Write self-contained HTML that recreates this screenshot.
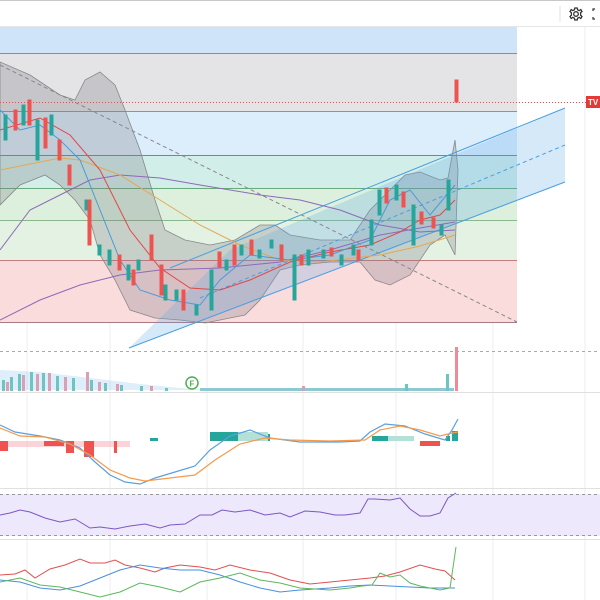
<!DOCTYPE html>
<html><head><meta charset="utf-8"><style>
html,body{margin:0;padding:0;background:#fff;width:600px;height:600px;overflow:hidden;font-family:"Liberation Sans",sans-serif}
svg{display:block}
</style></head><body>
<svg width="600" height="600" viewBox="0 0 600 600" xmlns="http://www.w3.org/2000/svg">
<rect width="600" height="600" fill="#fff"/>
<line x1="0" y1="0.5" x2="600" y2="0.5" stroke="#c8c8c8"/>
<line x1="0" y1="26.5" x2="600" y2="26.5" stroke="#e6e6e6"/>
<line x1="560" y1="6" x2="560" y2="22" stroke="#e0e0e0"/>
<!-- gear -->
<g transform="translate(576,14)" fill="none" stroke="#333" stroke-width="1.3">
<circle r="2.3"/>
<path d="M-1.2,-6 L1.2,-6 L1.6,-4.2 L3.2,-3.4 L4.8,-4.5 L6,-2.5 L4.6,-1.2 L4.6,1.2 L6,2.5 L4.8,4.5 L3.2,3.4 L1.6,4.2 L1.2,6 L-1.2,6 L-1.6,4.2 L-3.2,3.4 L-4.8,4.5 L-6,2.5 L-4.6,1.2 L-4.6,-1.2 L-6,-2.5 L-4.8,-4.5 L-3.2,-3.4 L-1.6,-4.2Z"/>
</g>
<path d="M595,9 L593,9 L593,11 M593,17 L593,19 L595,19" stroke="#333" fill="none" stroke-width="1.2"/>
<!-- grid -->
<g stroke="#eeeeee" stroke-width="1">
<line x1="27" y1="27" x2="27" y2="600"/><line x1="110" y1="27" x2="110" y2="600"/><line x1="207" y1="27" x2="207" y2="600"/><line x1="303" y1="27" x2="303" y2="600"/><line x1="396" y1="27" x2="396" y2="600"/><line x1="493" y1="27" x2="493" y2="600"/><line x1="585" y1="27" x2="585" y2="600"/>
</g>
<!-- fib bands -->
<rect x="0" y="27" width="517" height="26" fill="#cfe4f8"/>
<rect x="0" y="53" width="517" height="58" fill="#e4e4e7"/>
<rect x="0" y="111" width="517" height="44" fill="#dcedfb"/>
<rect x="0" y="155" width="517" height="33" fill="#d2eee9"/>
<rect x="0" y="188" width="517" height="32" fill="#dcf0dd"/>
<rect x="0" y="220" width="517" height="40" fill="#e3f2e3"/>
<rect x="0" y="260" width="517" height="62" fill="#fbdcdd"/>
<g stroke-width="1">
<line x1="0" y1="53.5" x2="517" y2="53.5" stroke="#8a8d94"/>
<line x1="0" y1="111.5" x2="517" y2="111.5" stroke="#6a9bd0"/>
<line x1="0" y1="155.5" x2="517" y2="155.5" stroke="#4e9a8e"/>
<line x1="0" y1="188.5" x2="517" y2="188.5" stroke="#6aaa7a"/>
<line x1="0" y1="220.5" x2="517" y2="220.5" stroke="#8ab88a"/>
<line x1="0" y1="260.5" x2="517" y2="260.5" stroke="#c97a7e"/>
<line x1="0" y1="322.5" x2="517" y2="322.5" stroke="#a77a85"/>
</g>
<!-- bollinger fill -->
<path d="M0,62 L30,75 L60,95 L75,100 L85,80 L100,72 L115,85 L125,110 L140,150 L155,200 L165,230 L185,240 L210,245 L235,240 L260,225 L275,225 L290,235 L320,240 L350,240 L370,210 L390,190 L405,175 L420,172 L440,180 L448,178 L455,140 L458,170 L455,255 L445,235 L430,245 L410,275 L390,285 L375,280 L360,262 L330,262 L300,265 L280,270 L260,300 L245,315 L230,318 L205,323 L180,320 L155,318 L130,310 L115,280 L100,255 L90,220 L75,200 L60,185 L45,175 L20,185 L0,205Z" fill="#7b7b80" fill-opacity="0.28" stroke="#888" stroke-width="0.8"/>
<!-- channel -->
<polygon points="129,348 565,182 565,108 230,250" fill="#5aa8e8" fill-opacity="0.25"/>
<line x1="129" y1="348" x2="565" y2="182" stroke="#4a9fe0" stroke-width="1"/>
<line x1="170" y1="268" x2="565" y2="108" stroke="#4a9fe0" stroke-width="1"/>
<line x1="200" y1="298" x2="565" y2="145" stroke="#4a9fe0" stroke-width="1" stroke-dasharray="4,3"/>
<line x1="0" y1="65" x2="517" y2="322" stroke="#888" stroke-width="1" stroke-dasharray="4,3"/>
<!-- MAs -->
<polyline points="0,250 30,210 60,195 90,180 120,175 160,178 200,185 260,195 300,200 340,210 380,225 420,232 455,230" fill="none" stroke="#8e6ab8" stroke-width="1"/>
<polyline points="0,320 40,300 80,285 120,275 160,270 220,268 280,262 330,250 380,235 420,228 455,222" fill="none" stroke="#8e6ab8" stroke-width="1"/>
<polyline points="0,170 60,158 80,160 120,175 160,200 200,225 240,245 280,260 320,262 380,255 420,246 455,235" fill="none" stroke="#e3a855" stroke-width="1"/>
<polyline points="0,130 40,118 70,135 100,170 130,230 160,268 190,288 220,290 250,280 290,262 330,252 370,245 400,232 420,220 440,215 455,200" fill="none" stroke="#e04848" stroke-width="1"/>
<polyline points="0,110 20,130 40,125 60,140 80,160 100,210 120,260 140,290 170,300 200,305 220,280 250,255 290,260 330,255 370,240 390,200 410,190 430,215 455,185" fill="none" stroke="#4a9ad8" stroke-width="1"/>
<!-- price line -->
<line x1="0" y1="102.5" x2="600" y2="102.5" stroke="#e05050" stroke-width="1" stroke-dasharray="1,2"/>
<rect x="586" y="96" width="14" height="12" fill="#e53935"/>
<text x="588" y="105" font-size="8" font-weight="bold" fill="#fff">TV</text>
<!-- candles -->
<g stroke-width="1">
<g fill="#26a69a" stroke="#26a69a">
<rect x="4" y="115" width="3" height="25"/><rect x="22" y="105" width="3" height="20"/><rect x="36" y="120" width="3" height="40"/><rect x="50" y="115" width="3" height="20"/><rect x="85" y="200" width="3" height="10"/><rect x="98" y="245" width="3" height="10"/><rect x="108" y="250" width="3" height="15"/><rect x="127" y="265" width="3" height="15"/><rect x="137" y="260" width="3" height="10"/><rect x="164" y="285" width="3" height="15"/><rect x="175" y="290" width="3" height="10"/><rect x="195" y="305" width="3" height="10"/><rect x="210" y="270" width="3" height="40"/><rect x="225" y="260" width="3" height="10"/><rect x="240" y="245" width="3" height="10"/><rect x="258" y="250" width="3" height="8"/><rect x="270" y="240" width="3" height="8"/><rect x="293" y="255" width="3" height="45"/><rect x="307" y="250" width="3" height="15"/><rect x="322" y="250" width="3" height="8"/><rect x="340" y="255" width="3" height="10"/><rect x="352" y="245" width="3" height="10"/><rect x="370" y="220" width="3" height="25"/><rect x="378" y="190" width="3" height="25"/><rect x="395" y="185" width="3" height="15"/><rect x="412" y="205" width="3" height="40"/><rect x="440" y="225" width="3" height="10"/><rect x="447" y="180" width="3" height="30"/>
</g>
<g fill="#ef5350" stroke="#ef5350">
<rect x="14" y="110" width="3" height="20"/><rect x="28" y="100" width="3" height="25"/><rect x="44" y="118" width="3" height="30"/><rect x="58" y="140" width="3" height="20"/><rect x="68" y="165" width="3" height="20"/><rect x="88" y="200" width="3" height="45"/><rect x="118" y="255" width="3" height="15"/><rect x="132" y="270" width="3" height="15"/><rect x="150" y="235" width="3" height="25"/><rect x="160" y="265" width="3" height="30"/><rect x="182" y="290" width="3" height="20"/><rect x="218" y="252" width="3" height="15"/><rect x="233" y="245" width="3" height="20"/><rect x="250" y="240" width="3" height="15"/><rect x="280" y="245" width="3" height="15"/><rect x="300" y="255" width="3" height="10"/><rect x="330" y="248" width="3" height="8"/><rect x="357" y="250" width="3" height="10"/><rect x="385" y="188" width="3" height="15"/><rect x="402" y="192" width="3" height="15"/><rect x="420" y="212" width="3" height="12"/><rect x="432" y="218" width="3" height="10"/><rect x="455" y="80" width="3" height="22"/>
</g>
</g>
<!-- volume pane -->
<line x1="0" y1="351.5" x2="600" y2="351.5" stroke="#aaa" stroke-dasharray="3,3"/>
<path d="M0,370 L40,372 L90,378 L140,384 L180,388 L220,390 L0,390Z" fill="#5aa8e8" fill-opacity="0.2"/>
<g fill="#6ec4c0">
<rect x="2" y="380" width="3" height="11"/><rect x="10" y="377" width="3" height="14"/><rect x="18" y="374" width="3" height="17"/><rect x="30" y="372" width="3" height="19"/><rect x="42" y="373" width="3" height="18"/><rect x="56" y="376" width="3" height="15"/><rect x="72" y="378" width="3" height="13"/><rect x="90" y="380" width="3" height="11"/><rect x="104" y="383" width="3" height="8"/><rect x="120" y="385" width="3" height="6"/><rect x="140" y="386" width="3" height="5"/><rect x="165" y="388" width="3" height="3"/>
</g>
<g fill="#d9a0b5">
<rect x="6" y="382" width="3" height="9"/><rect x="22" y="375" width="3" height="16"/><rect x="36" y="374" width="3" height="17"/><rect x="48" y="373" width="3" height="18"/><rect x="64" y="377" width="3" height="14"/><rect x="86" y="372" width="3" height="19"/><rect x="98" y="382" width="3" height="9"/><rect x="116" y="384" width="3" height="7"/><rect x="150" y="386" width="3" height="5"/>
</g>
<rect x="200" y="388" width="254" height="3" fill="#8cc9d0"/>
<rect x="302" y="386" width="3" height="5" fill="#d9a0b5"/><rect x="405" y="384" width="3" height="7" fill="#6ec4c0"/><rect x="446" y="374" width="3" height="17" fill="#6ec4c0"/>
<rect x="455" y="347" width="3" height="44" fill="#f08a96"/>
<circle cx="192" cy="383" r="6" fill="#fff" stroke="#4caf50" stroke-width="1.5"/>
<text x="189.5" y="386.5" font-size="8" font-weight="bold" fill="#4caf50">F</text>
<line x1="0" y1="392.5" x2="600" y2="392.5" stroke="#e0e0e0"/>
<!-- MACD -->
<g fill="#f7b8bf"><rect x="0" y="441" width="130" height="6" opacity="0.6"/></g>
<g fill="#ef5350"><rect x="0" y="441" width="8" height="10"/><rect x="44" y="441" width="20" height="5"/><rect x="66" y="441" width="8" height="12"/><rect x="84" y="441" width="10" height="16"/><rect x="114" y="441" width="3" height="12"/><rect x="420" y="441" width="20" height="5"/></g>
<g fill="#26a69a"><rect x="150" y="438" width="8" height="3"/><rect x="210" y="432" width="28" height="9"/><rect x="266" y="434" width="4" height="7"/><rect x="372" y="436" width="16" height="5"/><rect x="452" y="431" width="6" height="10"/><rect x="446" y="436" width="4" height="5"/></g>
<g fill="#b5e0d8"><rect x="238" y="432" width="30" height="9"/><rect x="388" y="436" width="26" height="5"/></g>
<polyline points="0,425 15,432 40,436 60,440 80,448 95,462 110,475 125,482 140,484 155,478 175,472 195,466 210,450 230,436 250,430 270,438 300,442 340,442 360,441 370,432 385,424 405,426 425,434 445,440 452,430 458,419" fill="none" stroke="#5aa0e0" stroke-width="1.2"/>
<polyline points="0,428 20,436 45,437 70,444 90,455 110,470 130,478 145,481 170,478 195,475 215,460 240,444 265,438 290,440 330,441 365,440 380,430 400,426 420,430 440,436 452,433 458,432" fill="none" stroke="#f59a4a" stroke-width="1.2"/>
<line x1="0" y1="488.5" x2="600" y2="488.5" stroke="#e0e0e0"/>
<!-- RSI -->
<rect x="0" y="494" width="600" height="42" fill="#ede8fb"/>
<line x1="0" y1="494.5" x2="600" y2="494.5" stroke="#999" stroke-dasharray="3,3"/>
<line x1="0" y1="535.5" x2="600" y2="535.5" stroke="#999" stroke-dasharray="3,3"/>
<polyline points="0,515 10,513 20,510 30,512 45,518 60,522 75,519 90,528 100,527 115,529 130,526 145,524 160,528 170,525 185,524 200,515 212,515 222,510 235,512 250,510 265,515 280,513 290,517 305,511 320,512 335,515 345,515 360,513 368,499 375,499 390,500 400,498 410,509 420,516 430,516 440,513 448,498 456,493" fill="none" stroke="#7e57c2" stroke-width="1"/>
<line x1="0" y1="539.5" x2="600" y2="539.5" stroke="#e0e0e0"/>
<!-- bottom pane -->
<polyline points="0,575 15,574 25,570 35,578 50,569 65,565 80,559 90,563 105,563 115,560 125,565 140,568 155,572 165,568 180,565 200,567 215,570 230,565 250,570 270,573 290,580 310,584 330,582 350,580 370,578 385,576 400,572 420,565 435,569 445,571 455,580" fill="none" stroke="#e05050" stroke-width="1"/>
<polyline points="0,580 20,582 40,588 60,590 80,586 100,578 120,570 140,565 160,568 180,570 200,570 220,575 240,582 260,588 280,592 300,590 330,588 350,586 370,585 390,586 410,587 430,588 455,588" fill="none" stroke="#4a8fe0" stroke-width="1"/>
<polyline points="0,582 20,578 40,585 60,587 80,592 100,597 120,592 140,583 160,587 180,592 200,582 220,578 240,573 260,580 280,583 300,588 330,590 350,588 362,586 372,585 380,573 390,577 400,575 410,583 420,586 440,590 450,588 456,547" fill="none" stroke="#5cb85c" stroke-width="1"/>
</svg>
</body></html>
